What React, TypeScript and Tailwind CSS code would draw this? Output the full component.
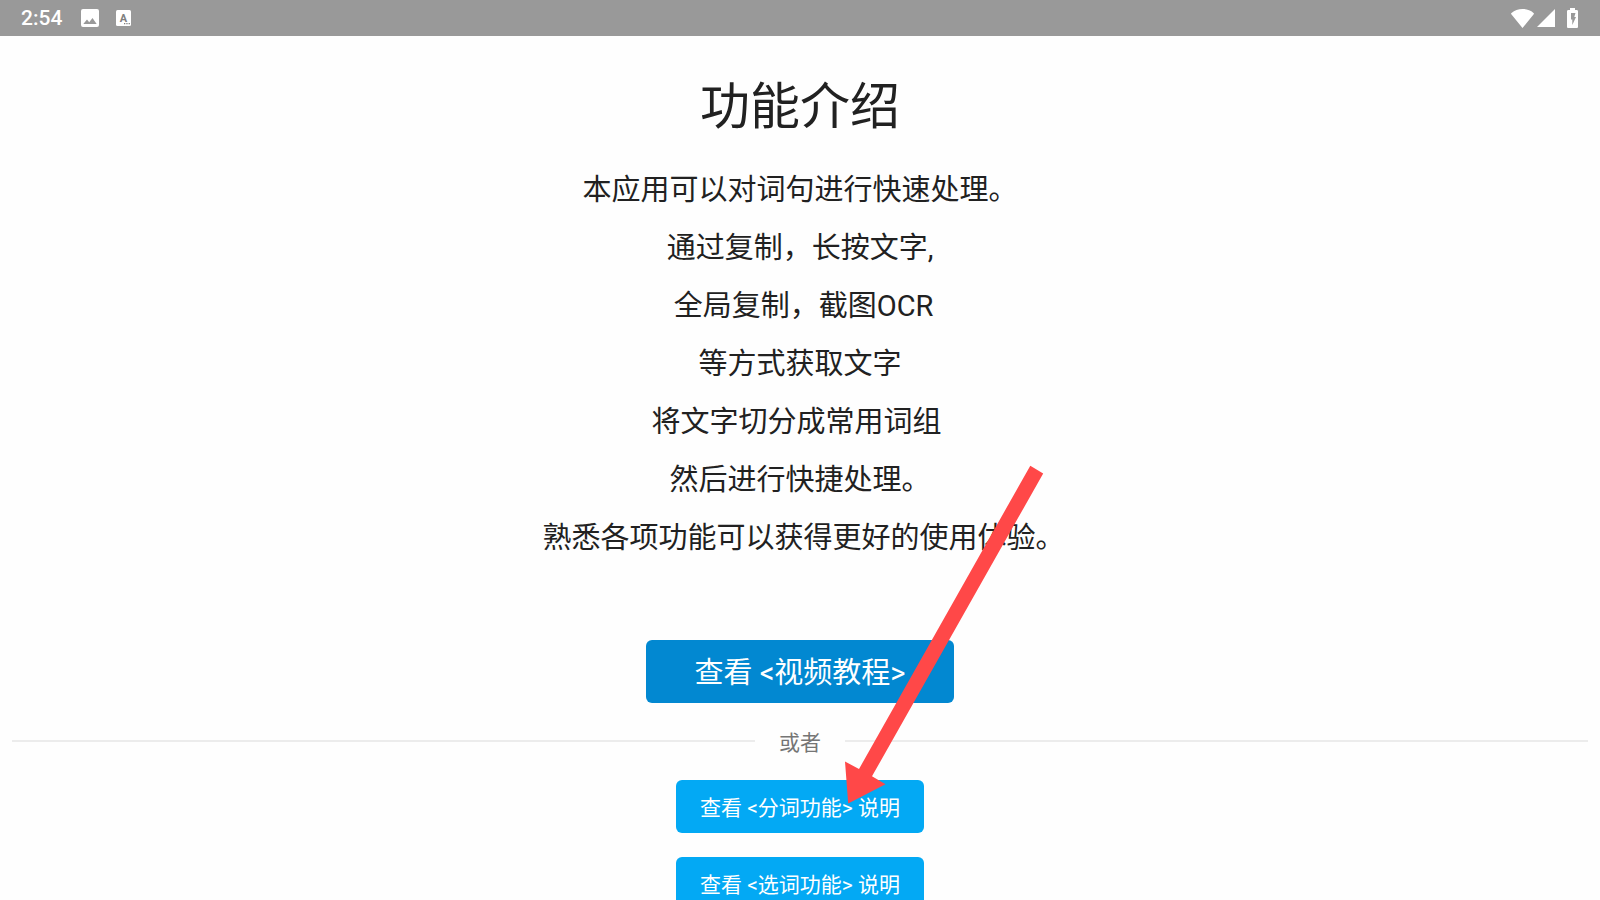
import React from "react";

const introLines = [
  "本应用可以对词句进行快速处理。",
  "通过复制，长按文字,",
  " 全局复制，截图OCR",
  "等方式获取文字",
  "将文字切分成常用词组 ",
  "然后进行快捷处理。",
  " 熟悉各项功能可以获得更好的使用体验。",
];

const guides = ["查看 <分词功能> 说明", "查看 <选词功能> 说明"];

function StatusBar() {
  return (
    <header className="flex h-9 shrink-0 items-center justify-between bg-[#999999] pr-[22px] pl-[21px] text-white">
      <div className="flex items-center">
        <time className="w-[60px] text-[21px] leading-9 font-medium">2:54</time>
        <svg className="h-[18px] w-[18px]" viewBox="0 0 18 18" aria-label="Image">
          <path
            fill="currentColor"
            fillRule="evenodd"
            d="M2 0h14a2 2 0 0 1 2 2v14a2 2 0 0 1-2 2H2a2 2 0 0 1-2-2V2a2 2 0 0 1 2-2Zm.3 15h13.400L11.500 9l-3.300 4.300L6 10.600z"
          />
        </svg>
        <svg className="ml-[17px] h-4 w-[15px]" viewBox="0 0 15 16" aria-label="Input">
          <rect width="15" height="16" rx="1.500" fill="currentColor" />
          <text x="7.500" y="11.500" textAnchor="middle" fontSize="11" fontWeight="700" fill="#808080">
            A
          </text>
          <path fill="#808080" d="M8 13h1.300v1.300H8zM10.300 13h1.300v1.300h-1.300zM12.600 13h1.300v1.300h-1.300z" />
        </svg>
      </div>
      <div className="flex items-center">
        <svg className="h-[19px] w-[23px]" viewBox="0 0 23 19" aria-label="Wi-Fi">
          <path fill="currentColor" d="M11.500 19 .3 5.200Q-.3 4.500.5 3.900C3.500 1.400 7.300 0 11.500 0s8 1.400 11 3.900q.8.600.2 1.300Z" />
        </svg>
        <svg className="ml-[3px] h-[18px] w-[18px]" viewBox="0 0 18 18" aria-label="Signal">
          <path fill="currentColor" d="M0 18 18 0v18Z" />
        </svg>
        <svg className="ml-3 h-5 w-[11px]" viewBox="0 0 11 20" aria-label="Charging">
          <path
            fill="currentColor"
            fillRule="evenodd"
            d="M3 0h5v2h1.700c.7 0 1.300.6 1.300 1.300v15.400c0 .7-.6 1.300-1.300 1.300H1.300C.6 20 0 19.400 0 18.700V3.300C0 2.600.6 2 1.300 2H3ZM4 5v6.500h1.300V17L9 9H7.300L8.500 5Z"
          />
        </svg>
      </div>
    </header>
  );
}

function PointerArrow() {
  return (
    <svg
      className="pointer-events-none absolute top-[429px] left-1/2 ml-[45px] h-[339px] w-[199px]"
      viewBox="0 0 199 339"
      aria-hidden="true"
    >
      <path fill="#ff4848" d="M185.300.700 198.200 8.500 27 311.300 40.500 319.200 3.200 338.500 0 296.500 14 304Z" />
    </svg>
  );
}

export default function App() {
  return (
    <div
      lang="zh-CN"
      className="flex h-screen flex-col overflow-hidden bg-[#fefefe] font-[Roboto,'Noto_Sans_CJK_SC',sans-serif] text-[#212121]"
    >
      <StatusBar />
      <main className="min-h-0 flex-1 overflow-y-auto [scrollbar-width:none]">
        <div className="relative flex flex-col items-center px-3 pt-[33px] pb-6">
          <h1 className="text-[50px] leading-[76px]">功能介绍</h1>
          <div className="mt-4 text-center text-[29px] leading-[58px]">
            {introLines.map((line) => (
              <p key={line} className="whitespace-pre">
                {line}
              </p>
            ))}
          </div>
          <button className="mt-[73px] h-[63px] rounded-md bg-[#0288d1] px-12 pt-1 text-[29px] text-white">
            查看 &lt;视频教程&gt;
          </button>
          <div className="mt-[22px] flex w-full items-center gap-6 text-[21px] leading-7 text-[#757575]">
            <span className="h-0.5 flex-1 bg-[#ececec]" />
            <span className="pt-1">或者</span>
            <span className="h-0.5 flex-1 bg-[#ececec]" />
          </div>
          <div className="mt-[23px] flex flex-col gap-6">
            {guides.map((guide) => (
              <button key={guide} className="h-[53px] rounded-md bg-[#03a9f4] px-6 pt-1 text-[21px] text-white">
                {guide}
              </button>
            ))}
          </div>
          <PointerArrow />
        </div>
      </main>
    </div>
  );
}
